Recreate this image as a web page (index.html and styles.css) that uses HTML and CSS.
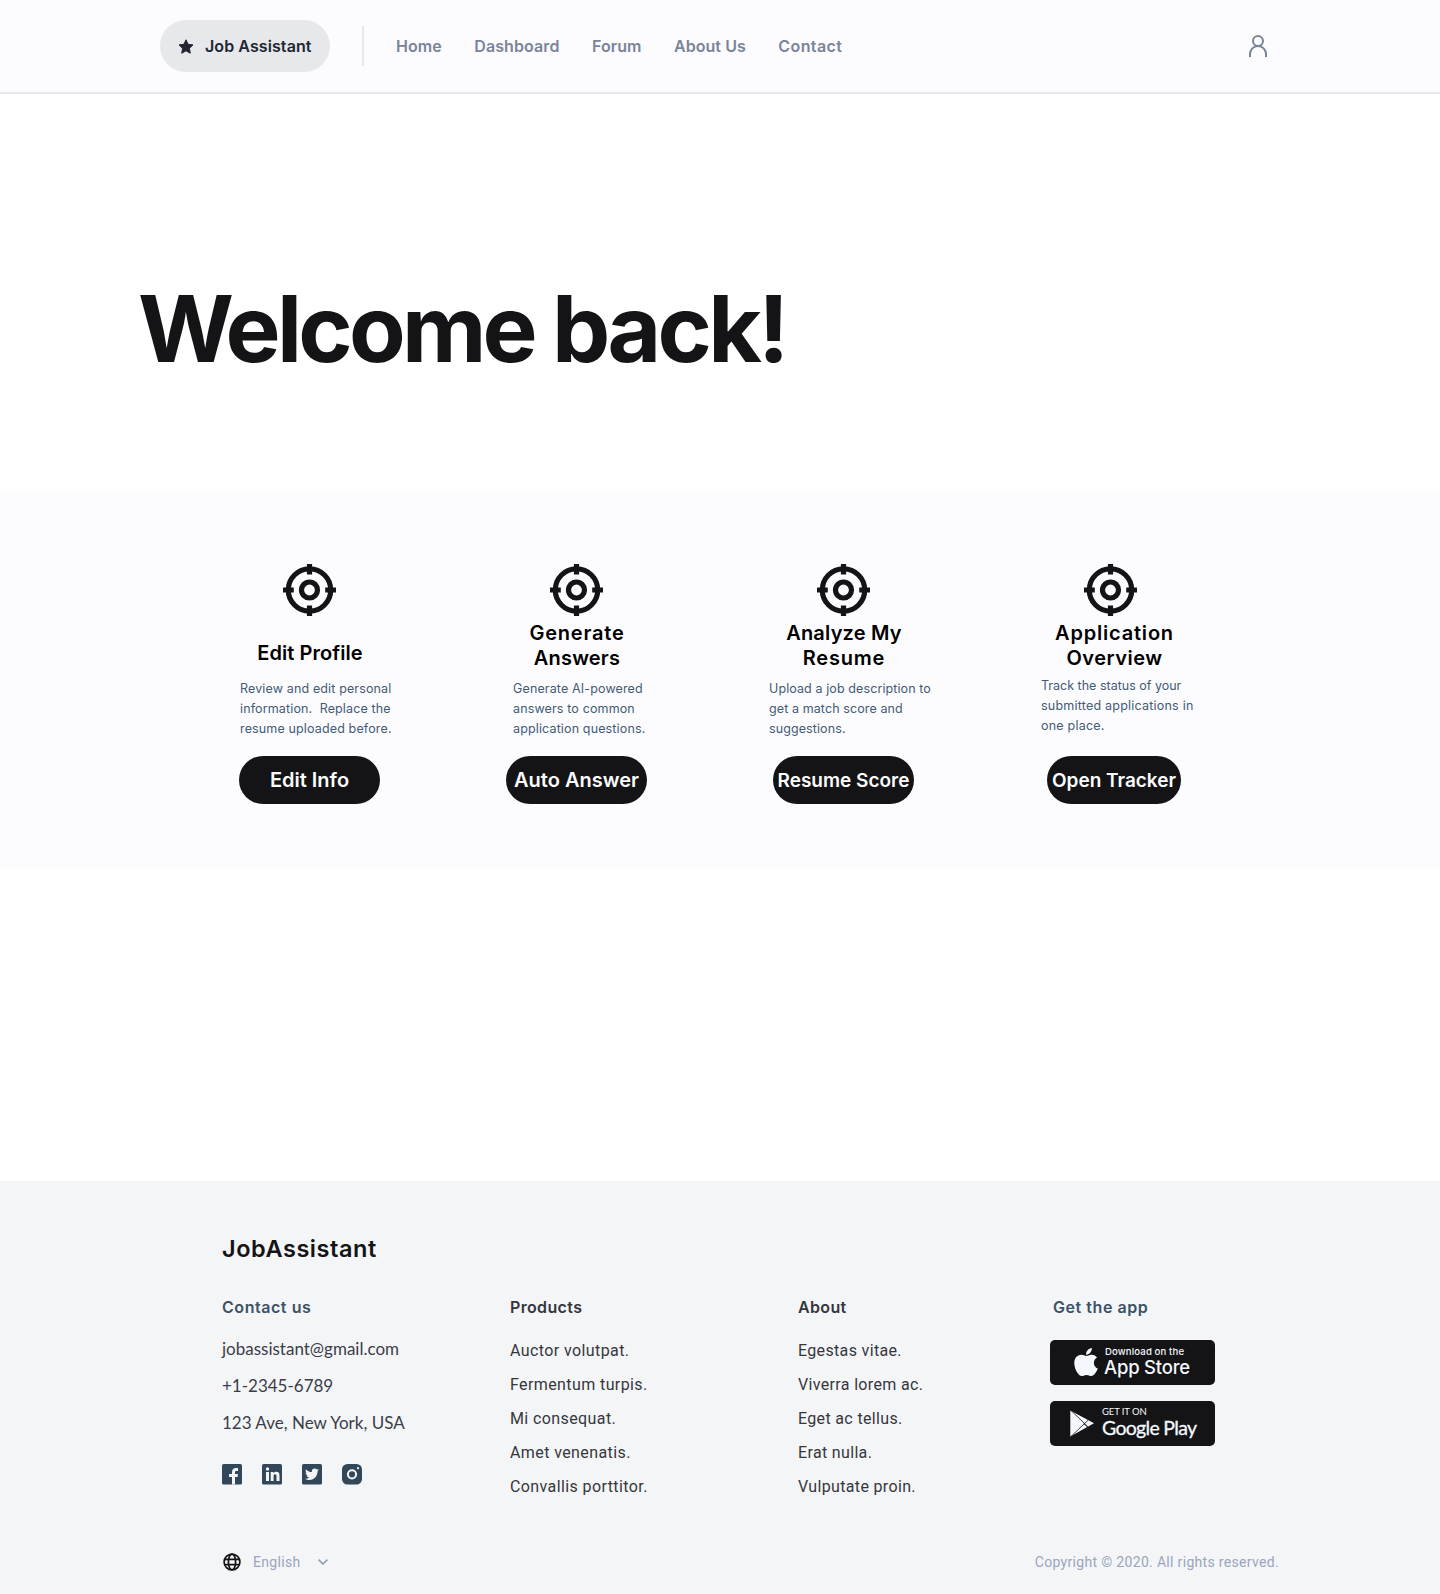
FILE: index.html
```
<!DOCTYPE html>
<html lang="en">
<head>
<meta charset="utf-8">
<title>Job Assistant</title>
<link rel="stylesheet" href="styles.css">
</head>
<body>
<svg class="sprite" aria-hidden="true">
  <symbol id="target" viewBox="0 0 53 52">
    <g fill="none" stroke="#141416">
      <circle cx="26.5" cy="26" r="21.2" stroke-width="5.2"/>
      <circle cx="26.5" cy="26" r="8" stroke-width="5.2"/>
      <path stroke-width="5.2" d="M26.5 0v10.5M26.5 41.5V52M0 26h10.8M42.2 26H53"/>
    </g>
  </symbol>
</svg>

<header class="header">
  <a class="brand">
    <svg width="16" height="15" viewBox="0 0 16 15"><path fill="#212631" stroke="#212631" stroke-width="1" stroke-linejoin="round" d="M8 .8l2.1 4.5 4.9.6-3.6 3.4.9 4.9L8 11.8l-4.3 2.4.9-4.9L1 5.9l4.9-.6z"/></svg>
    <span>Job Assistant</span>
  </a>
  <nav class="nav">
    <a>Home</a><a class="dashboard">Dashboard</a><a>Forum</a><a>About Us</a><a class="contact-link">Contact</a>
  </nav>
  <svg class="user" width="18" height="22" viewBox="0 0 18 22" fill="none" stroke="#7a8499" stroke-width="2"><circle cx="9" cy="6" r="5"/><path d="M1 22v-3a8 8 0 0 1 16 0v3"/></svg>
</header>

<main>
  <section class="hero"><h1>Welcome back!</h1></section>

  <section class="cards">
    <article class="card profile">
      <svg class="target"><use href="#target"/></svg>
      <h2>Edit Profile</h2>
      <p>Review and edit personal<br>information.&nbsp; Replace the<br>resume uploaded before.</p>
      <button>Edit Info</button>
    </article>
    <article class="card answers">
      <svg class="target"><use href="#target"/></svg>
      <h2><span class="wide">Generate</span><br>Answers</h2>
      <p>Generate AI-powered<br>answers to common<br>application questions.</p>
      <button>Auto Answer</button>
    </article>
    <article class="card resume">
      <svg class="target"><use href="#target"/></svg>
      <h2>Analyze My<br><span class="wide">Resume</span></h2>
      <p>Upload a job description to<br>get a match score and<br>suggestions.</p>
      <button>Resume Score</button>
    </article>
    <article class="card overview">
      <svg class="target"><use href="#target"/></svg>
      <h2><span class="wide">Application</span><br>Overview</h2>
      <p><span class="tight">Track the status of your</span><br>submitted applications in<br>one place.</p>
      <button>Open Tracker</button>
    </article>
  </section>
</main>

<footer class="footer">
  <div class="footer-title">JobAssistant</div>
  <div class="footer-grid">
    <section>
      <h3 class="accent">Contact us</h3>
      <ul class="contact">
        <li>jobassistant@gmail.com</li>
        <li>+1-2345-6789</li>
        <li>123 Ave, New York, USA</li>
      </ul>
      <div class="social">
        <svg width="20" height="21" viewBox="0 0 20 21"><rect width="20" height="20.5" rx="1.6" fill="#33475b"/><path fill="#f4f5f7" d="M10 20.5V13H7v-3h3V8c0-2.800 1.600-4 4-4h2v3h-1.500C13.300 7 13 7.500 13 8.400V10h3l-.5 3H13v7.500z"/></svg>
        <svg width="20" height="21" viewBox="0 0 20 21"><rect width="20" height="20.500" rx="1.600" fill="#33475b"/><g fill="#f4f5f7"><circle cx="5.500" cy="5" r="1.700"/><path d="M4 8h3v9H4zM8.700 8h2.800v1.300c.6-1 1.600-1.500 2.800-1.500 2.600 0 3.200 1.600 3.200 4V17h-3v-4.600c0-1.200-.2-2.200-1.400-2.200s-1.500.9-1.500 2.200V17H8.700z"/></g></svg>
        <svg width="20" height="21" viewBox="0 0 20 21"><rect width="20" height="20.500" rx="1.600" fill="#33475b"/><path fill="#f4f5f7" transform="translate(3 3.300) scale(.0272)" d="M459.370 151.716c.325 4.548.325 9.097.325 13.645 0 138.720-105.583 298.558-298.558 298.558-59.452 0-114.680-17.219-161.137-47.106 8.447.974 16.568 1.299 25.340 1.299 49.055 0 94.213-16.568 130.274-44.832-46.132-.975-84.792-31.188-98.112-72.772 6.498.974 12.995 1.624 19.818 1.624 9.421 0 18.843-1.300 27.614-3.573-48.081-9.747-84.143-51.980-84.143-102.985v-1.299c13.969 7.797 30.214 12.670 47.431 13.319-28.264-18.843-46.781-51.005-46.781-87.391 0-19.492 5.197-37.360 14.294-52.954 51.655 63.675 129.300 105.258 216.365 109.807-1.624-7.797-2.599-15.918-2.599-24.040 0-57.828 46.782-104.934 104.934-104.934 30.213 0 57.502 12.670 76.670 33.137 23.715-4.548 46.456-13.320 66.599-25.340-7.798 24.366-24.366 44.833-46.132 57.827 21.117-2.273 41.584-8.122 60.426-16.243-14.292 20.791-32.161 39.308-52.628 54.253z"/></svg>
        <svg width="20" height="21" viewBox="0 0 20 21"><rect width="20" height="20.500" rx="5.500" fill="#33475b"/><circle cx="10" cy="10.300" r="4.100" fill="none" stroke="#f4f5f7" stroke-width="2"/><circle cx="16" cy="4.200" r="1.100" fill="#f4f5f7"/></svg>
      </div>
    </section>
    <section>
      <h3>Products</h3>
      <ul class="links"><li>Auctor volutpat.</li><li>Fermentum turpis.</li><li>Mi consequat.</li><li>Amet venenatis.</li><li>Convallis porttitor.</li></ul>
    </section>
    <section>
      <h3>About</h3>
      <ul class="links about"><li>Egestas vitae.</li><li>Viverra lorem ac.</li><li>Eget ac tellus.</li><li>Erat nulla.</li><li>Vulputate proin.</li></ul>
    </section>
    <section>
      <h3 class="accent get-app">Get the app</h3>
      <div class="badges">
        <a class="badge apple">
          <svg width="24" height="28" viewBox="0 32 384 448"><path fill="#f4f8fd" d="M318.700 268.700c-.2-36.700 16.400-64.400 50-84.800-18.800-26.900-47.200-41.700-84.700-44.600-35.500-2.800-74.300 20.700-88.500 20.700-15 0-49.400-19.700-76.400-19.700C63.300 141.200 4 184.800 4 273.500q0 39.300 14.400 81.200c12.800 36.700 59 126.700 107.200 125.200 25.200-.6 43-17.900 75.800-17.900 31.800 0 48.300 17.900 76.400 17.900 48.600-.7 90.400-82.500 102.600-119.300-65.200-30.700-61.700-90-61.700-91.900zm-56.600-164.200c27.300-32.400 24.800-61.900 24-72.500-24.100 1.400-52 16.400-67.900 34.900-17.500 19.800-27.800 44.300-25.600 71.900 26.100 2 49.900-11.400 69.500-34.300z"/></svg>
          <span class="badge-text"><small>Download on the</small><b>App Store</b></span>
        </a>
        <a class="badge google">
          <svg width="24" height="27" viewBox="0 0 24 27"><path fill="#f4f8fd" d="M.3.600 24 13.300.3 26.400z"/><path fill="none" stroke="#141416" stroke-width=".8" d="M1 .5l17 16.300M1 26.500l17-16.300M13.500 13.500l4.500 4"/></svg>
          <span class="badge-text"><small>GET IT ON</small><b>Google Play</b></span>
        </a>
      </div>
    </section>
  </div>
  <div class="footer-bottom">
    <div class="language">
      <svg width="18" height="18" viewBox="0 0 18 18" fill="none" stroke="#141416" stroke-width="1.700"><circle cx="9" cy="9" r="7.900"/><ellipse cx="9" cy="9" rx="3.600" ry="7.900"/><path d="M1.700 6.300h14.600M1.700 11.700h14.600"/></svg>
      <span>English</span>
      <svg class="chevron" width="10" height="6" viewBox="0 0 10 6" fill="none" stroke="#8f9cba" stroke-width="1.600"><path d="M.6.600 5 5 9.400.6"/></svg>
    </div>
    <span class="copyright">Copyright © 2020. All rights reserved.</span>
  </div>
</footer>
</body>
</html>
```
FILE: styles.css
```
* { box-sizing: border-box; }
body { margin: 0; background: #fff; font-family: Inter, sans-serif; color: #141416; }
h1, h2, h3, p, ul { margin: 0; padding: 0; }
ul { list-style: none; }
svg { display: block; flex: none; }
.sprite { display: none; }

.header { display: flex; align-items: center; height: 94px; padding: 0 173px 0 160px; background: #fcfcfe; border-bottom: 2px solid #e6e8eb; }
.brand { display: flex; align-items: center; gap: 11.5px; width: 170px; height: 52px; padding-left: 17.5px; border-radius: 26px; background: #e6e8eb; color: #212631; font-size: 16px; font-weight: 600; letter-spacing: .08px; white-space: nowrap; }
.brand span { padding-bottom: 1px; }
.nav { display: flex; align-items: center; gap: 32.5px; height: 40px; margin-left: 32px; padding: 0 0 1px 32px; border-left: 2px solid #e6e8eb; color: #7a8499; font-size: 16px; font-weight: 600; letter-spacing: .05px; white-space: nowrap; }
.dashboard { letter-spacing: .1px; }
.contact-link { letter-spacing: .4px; }
.user { margin-left: auto; }

.hero { height: 397px; padding: 178px 0 0 138px; }
.hero h1 { font-size: 92.5px; line-height: 112px; font-weight: 650; letter-spacing: -3.75px; white-space: nowrap; }

.cards { display: grid; grid-template-columns: repeat(4, 267px); height: 377px; padding: 73px 0 0 176px; background: #fcfcfe; }
.card { display: flex; flex-direction: column; align-items: center; }
.target { width: 53px; height: 52px; }
.card h2 { height: 50px; margin: 5px 0 -1px; padding-left: 1px; font-size: 20px; line-height: 25px; font-weight: 600; text-align: center; color: #000; letter-spacing: .2px; }
.card h2 .wide { letter-spacing: .8px; }
.card p { align-self: flex-start; height: 60px; margin-top: 9px; font-size: 12.5px; line-height: 20px; color: #425b76; letter-spacing: .14px; white-space: nowrap; }
.card button { width: 141px; height: 48px; margin-top: 17px; padding: 0; border: 0; border-radius: 24px; background: #141416; color: #fcfcfd; font: 600 20px/48px Inter, sans-serif; white-space: nowrap; }
.card.profile h2 { padding-top: 20px; letter-spacing: .05px; }
.profile p { margin-left: 64px; }
.answers p { margin-left: 70px; }
.resume p { margin-left: 59px; letter-spacing: .1px; }
.resume button { font-size: 19px; line-height: 47px; }
.card.overview h2 { padding-left: 8px; letter-spacing: .5px; }
.overview p { margin: 6px 0 3px 64px; letter-spacing: .22px; }
.overview .tight { letter-spacing: 0; }
.overview button { width: 134px; margin-left: 7px; font-size: 19px; line-height: 47px; }

.footer { height: 413px; margin-top: 313px; padding: 52px 161px 0 222px; background: #f4f5f7; }
.footer-title { font-size: 23.5px; line-height: 32px; font-weight: 600; letter-spacing: .55px; }
.footer-grid { display: grid; grid-template-columns: 288px 288px 252px 165px; height: 208.5px; margin-top: 30px; }
.footer h3 { font-size: 16px; line-height: 24px; font-weight: 600; letter-spacing: .35px; color: #34363f; }
.footer h3.accent { color: #3b5268; letter-spacing: .55px; }
.footer h3.get-app { padding-left: 3px; }
.contact { margin-top: 10.5px; font: 17px/37px Lato, sans-serif; color: #3b3d4a; }
.social { display: flex; gap: 20px; margin-top: 23.5px; }
.links { margin-top: 14.5px; font: 16px/34px Roboto, sans-serif; letter-spacing: .4px; color: #36373d; }
.links.about { letter-spacing: .34px; }
.badges { display: flex; flex-direction: column; gap: 16px; margin-top: 21px; }
.badge { display: flex; align-items: flex-start; width: 165px; height: 45px; border-radius: 5px; background: #141416; color: #f4f8fd; white-space: nowrap; }
.badge-text { display: flex; flex-direction: column; }
.badge small { font-size: 9.6px; line-height: 12px; font-weight: 500; letter-spacing: .12px; }
.badge b { font-size: 18.5px; line-height: 20px; font-weight: 500; letter-spacing: -.2px; }
.apple { padding: 8px 0 0 24px; }
.apple .badge-text { margin: -2px 0 0 6px; }
.apple small { padding-left: 1px; }
.apple b { margin-top: -1.5px; }
.google { padding: 9px 0 0 20px; }
.google .badge-text { margin: -4px 0 0 8px; font-family: Lato, sans-serif; }
.google small { font-size: 9.5px; font-weight: 400; letter-spacing: -.1px; }
.google b { font-size: 19.5px; font-weight: 400; letter-spacing: -.7px; -webkit-text-stroke: .3px #f4f8fd; }
.footer-bottom { display: flex; align-items: center; justify-content: space-between; height: 24px; margin-top: 46.5px; font: 14px/24px Roboto, sans-serif; color: #9aa5c0; letter-spacing: .32px; }
.language { display: flex; align-items: center; gap: 12px; padding-left: 1px; }
.chevron { margin-left: 5px; }
```
